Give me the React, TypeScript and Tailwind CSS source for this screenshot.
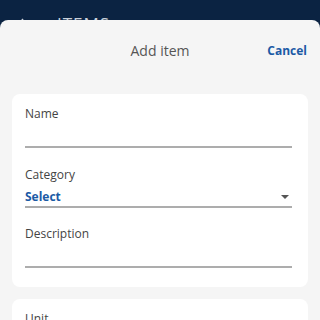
import React from "react";

export default function App() {
  const font = { fontFamily: '"Open Sans", "Noto Sans", sans-serif' };
  return (
    <div className="w-[320px] h-[320px] overflow-hidden bg-[#0b2342] flex flex-col" style={font}>
      <div className="h-[20px] shrink-0 relative">
        <div className="flex items-center gap-[30px] pl-[15px] pt-[14px] text-[#c9d0da]">
          <svg width="12" height="16" viewBox="0 0 12 16" fill="none" stroke="#c9d0da" strokeWidth="1.5">
            <path d="M8 3 L3 9 L8 15" />
          </svg>
          <span className="text-[17px] tracking-[1px] leading-[20px]">ITEMS</span>
        </div>
      </div>
      <div className="relative z-10 flex-1 bg-[#f5f5f5] rounded-t-[8px] flex flex-col">
        <div className="h-[62px] shrink-0 relative flex items-center justify-center">
          <span className="text-[14px] text-[#555555] leading-[20px]">Add item</span>
          <span className="absolute right-[13px] text-[12px] font-bold text-[#1b5aa5] leading-[20px]">Cancel</span>
        </div>
        <div className="px-[12px] pt-[12px] flex flex-col gap-[12px]">
          <div className="bg-white rounded-[8px] pl-[13px] pr-[16px] pt-[12px] pb-[19px] flex flex-col">
            <div className="text-[12px] leading-[16px] text-[#444444]">Name</div>
            <div className="h-[26px] border-b-2 border-[#adadad]"></div>
            <div className="mt-[19px] text-[12px] leading-[16px] text-[#444444]">Category</div>
            <div className="h-[25px] pt-[5px] border-b-2 border-[#adadad] flex items-center justify-between">
              <span className="text-[12px] font-bold text-[#1b5aa5] leading-[16px]">Select</span>
              <svg width="10" height="6" viewBox="0 0 10 6" className="mr-[2px]">
                <path d="M1 1 L9 1 L5 5 Z" fill="#555555" />
              </svg>
            </div>
            <div className="mt-[18px] text-[12px] leading-[16px] text-[#444444]">Description</div>
            <div className="h-[26px] border-b-2 border-[#adadad]"></div>
          </div>
          <div className="bg-white rounded-[8px] pl-[13px] pr-[16px] pt-[12px] pb-[19px] flex flex-col">
            <div className="text-[12px] leading-[16px] text-[#444444]">Unit</div>
            <div className="h-[26px] border-b-2 border-[#adadad]"></div>
          </div>
        </div>
      </div>
    </div>
  );
}
